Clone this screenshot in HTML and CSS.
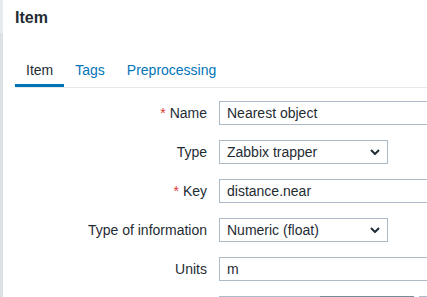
FILE: index.html
```html
<!DOCTYPE html>
<html lang="en">
<head>
    <meta charset="UTF-8">
    <meta name="viewport" content="width=device-width, initial-scale=1.0">
    <title>Item</title>
    <link rel="stylesheet" href="styles.css">
</head>
<body>

    <div class="page">
        <!-- Left sidebar edge -->
        <div class="sidebar"></div>

        <main class="content">
            <h1 class="title">Item</h1>

            <!-- Tabs -->
            <ul class="tabs">
                <li class="tab active">Item</li>
                <li class="tab">Tags</li>
                <li class="tab">Preprocessing</li>
            </ul>

            <!-- Item form -->
            <form class="item-form">
                <label class="label"><span class="req">*</span>Name</label>
                <div class="field"><input class="text wide" type="text" value="Nearest object"></div>

                <label class="label">Type</label>
                <div class="field">
                    <button type="button" class="select">
                        <span>Zabbix trapper</span>
                        <svg width="10" height="6" viewBox="0 0 10 6"><polyline points="1,1 5,5 9,1" fill="none" stroke="#1f2c33" stroke-width="2"/></svg>
                    </button>
                </div>

                <label class="label"><span class="req">*</span>Key</label>
                <div class="field"><input class="text wide" type="text" value="distance.near"></div>

                <label class="label">Type of information</label>
                <div class="field">
                    <button type="button" class="select">
                        <span>Numeric (float)</span>
                        <svg width="10" height="6" viewBox="0 0 10 6"><polyline points="1,1 5,5 9,1" fill="none" stroke="#1f2c33" stroke-width="2"/></svg>
                    </button>
                </div>

                <label class="label">Units</label>
                <div class="field"><input class="text wide" type="text" value="m"></div>

                <!-- Next row, only its top edge is in view -->
                <div class="label"></div>
                <div class="field">
                    <div class="radio-group">
                        <span class="radio"></span>
                        <span class="radio checked"></span>
                    </div>
                    <span class="text short"></span>
                </div>
            </form>
        </main>
    </div>

</body>
</html>
```

FILE: styles.css
```css
/* General Page Style */
html, body {
    height: 100%;
}

body {
    margin: 0;
    overflow: hidden;
    font-family: "Liberation Sans", Arial, sans-serif;
    font-size: 14px;
    color: #1f2c33;
    background-color: #fff;
}

.page {
    display: flex;
    height: 100%;
}

/* Left edge */
.sidebar {
    width: 3px;
    flex-shrink: 0;
    background: linear-gradient(#e8ebed 0, #e8ebed 33px, #dbe1e4 33px);
}

.content {
    flex: 1;
    min-width: 0;
    padding-left: 12px;
    overflow: hidden;
}

/* Title */
.title {
    margin: 0;
    padding: 9px 0 28px;
    font-size: 16px;
    line-height: 18px;
    font-weight: bold;
    color: #1f2c33;
}

/* Tabs */
.tabs {
    display: flex;
    margin: 0;
    padding: 0;
    list-style: none;
    border-bottom: 1px solid #e6e9eb;
}

.tab {
    padding: 6px 11px 5px;
    line-height: 18px;
    color: #0275b8;
    border-bottom: 3px solid transparent;
}

.tab.active {
    color: #1f2c33;
    border-bottom-color: #0275b8;
}

/* Form */
.item-form {
    display: grid;
    grid-template-columns: 192px 1fr;
    grid-auto-rows: 24px;
    column-gap: 12px;
    row-gap: 15px;
    margin-top: 13px;
}

.label {
    text-align: right;
    line-height: 24px;
    white-space: nowrap;
}

.req {
    color: #e33734;
    margin-right: 4px;
}

.field {
    display: flex;
    align-items: flex-start;
    gap: 5px;
}

.text {
    box-sizing: border-box;
    height: 24px;
    padding: 0 7px;
    border: 1px solid #acbbc7;
    border-radius: 0;
    font-family: inherit;
    font-size: 14px;
    color: #1f2c33;
    background: #fff;
    flex-shrink: 0;
}

.wide {
    width: 453px;
}

.short {
    width: 40px;
}

.select {
    box-sizing: border-box;
    display: flex;
    align-items: center;
    justify-content: space-between;
    width: 169px;
    height: 24px;
    padding: 0 7px;
    border: 1px solid #acbbc7;
    background: #fff;
    font-family: inherit;
    font-size: 14px;
    color: #1f2c33;
    text-align: left;
}

/* Segmented radio */
.radio-group {
    display: flex;
    flex-shrink: 0;
}

.radio {
    box-sizing: border-box;
    width: 101px;
    height: 24px;
    border: 1px solid #acbbc7;
}

.radio.checked {
    width: 94px;
    border-color: #768d99;
    background-color: #768d99;
}
```
